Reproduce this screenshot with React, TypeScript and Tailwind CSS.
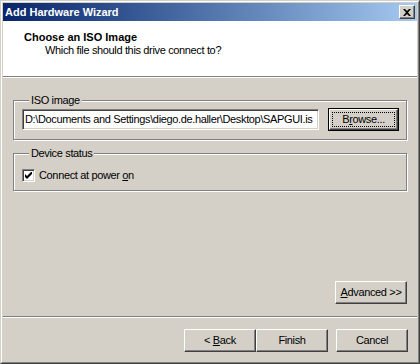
import React from "react";

const raised =
  "border border-t-white border-l-white border-r-[#404040] border-b-[#404040] shadow-[inset_-1px_-1px_0_#808080]";

const Button = ({ children, className = "" }: { children: React.ReactNode; className?: string }) => (
  <button className={`h-[23px] w-[72px] bg-[#d4d0c8] text-black ${raised} ${className}`}>{children}</button>
);

const GroupBox = ({ label, className = "", children }: { label: string; className?: string; children: React.ReactNode }) => (
  <fieldset
    className={`border border-[#808080] shadow-[inset_1px_1px_0_#fff,1px_1px_0_#fff] ${className}`}
  >
    <legend className="ml-[7px] bg-[#d4d0c8] px-[2px] leading-[13px]">{label}</legend>
    {children}
  </fieldset>
);

const App = () => {
  return (
    <div className="h-[364px] w-[420px] border border-t-[#d4d0c8] border-l-[#d4d0c8] border-r-[#404040] border-b-[#404040] font-['Liberation_Sans',Arial,sans-serif] text-[11px] tracking-[-0.35px] text-black">
      <div className="flex h-full flex-col border border-t-white border-l-white border-r-[#808080] border-b-[#808080] bg-[#d4d0c8] p-px">
        {/* title bar */}
        <div className="flex h-[18px] items-center justify-between bg-gradient-to-r from-[#0a246a] to-[#a6caf0] pl-[2px] pr-[2px]">
          <span className="font-bold tracking-normal text-white">Add Hardware Wizard</span>
          <button className={`flex h-[14px] w-[16px] items-center justify-center bg-[#d4d0c8] ${raised}`}>
            <svg width="8" height="7" viewBox="0 0 8 7">
              <path d="M0 0h2l2 2 2-2h2L5 3.5 8 7H6L4 5 2 7H0l3-3.5z" fill="#000" />
            </svg>
          </button>
        </div>

        {/* header */}
        <div className="h-[55px] bg-white pl-[21px] pt-[10px] leading-[13px]">
          <div className="font-bold tracking-normal">Choose an ISO Image</div>
          <div className="pl-[21px]">Which file should this drive connect to?</div>
        </div>
        <div className="h-px bg-[#808080]" />
        <div className="h-px bg-white" />

        {/* body */}
        <div className="flex flex-1 flex-col px-[10px]">
          <GroupBox label="ISO image" className="mt-[16px] pb-[8px] pl-[8px] pr-[7px]">
            <div className="mt-px flex items-center gap-[9px]">
              <div className="h-[21px] w-[297px] overflow-hidden whitespace-nowrap border border-t-[#808080] border-l-[#808080] border-r-white border-b-white bg-white px-[2px] leading-[19px] shadow-[inset_1px_1px_0_#404040,inset_-1px_-1px_0_#d4d0c8]">
                D:\Documents and Settings\diego.de.haller\Desktop\SAPGUI.is
              </div>
              <button className="h-[23px] w-[71px] border border-black bg-[#d4d0c8]">
                <span className={`flex h-full w-full items-center justify-center ${raised}`}>
                  <span className="border border-dotted border-black px-[9px] leading-[13px]">
                    B<u>r</u>owse...
                  </span>
                </span>
              </button>
            </div>
          </GroupBox>

          <GroupBox label="Device status" className="mt-[7px] pb-[8px] pl-[8px]">
            <label className="mt-[9px] flex items-center gap-[4px] leading-[13px]">
              <span className="flex h-[13px] w-[13px] items-center justify-center border border-t-[#808080] border-l-[#808080] border-r-white border-b-white bg-white shadow-[inset_1px_1px_0_#404040,inset_-1px_-1px_0_#d4d0c8]">
                <svg width="7" height="7" viewBox="0 0 7 7">
                  <path d="M0 2v3l2 2 5-5V-1L2 4z" fill="#000" />
                </svg>
              </span>
              <span>
                Connect at power <u>o</u>n
              </span>
            </label>
          </GroupBox>

          <div className="mt-auto flex justify-end pb-[12px]">
            <Button>
              <u>A</u>dvanced &gt;&gt;
            </Button>
          </div>
        </div>

        <div className="h-px bg-[#808080]" />
        <div className="h-px bg-white" />

        {/* footer */}
        <div className="flex justify-end pb-[9px] pr-[9px] pt-[11px]">
          <Button>
            &lt; <u>B</u>ack
          </Button>
          <Button>Finish</Button>
          <Button className="ml-[8px]">Cancel</Button>
        </div>
      </div>
    </div>
  );
};

export default App;
